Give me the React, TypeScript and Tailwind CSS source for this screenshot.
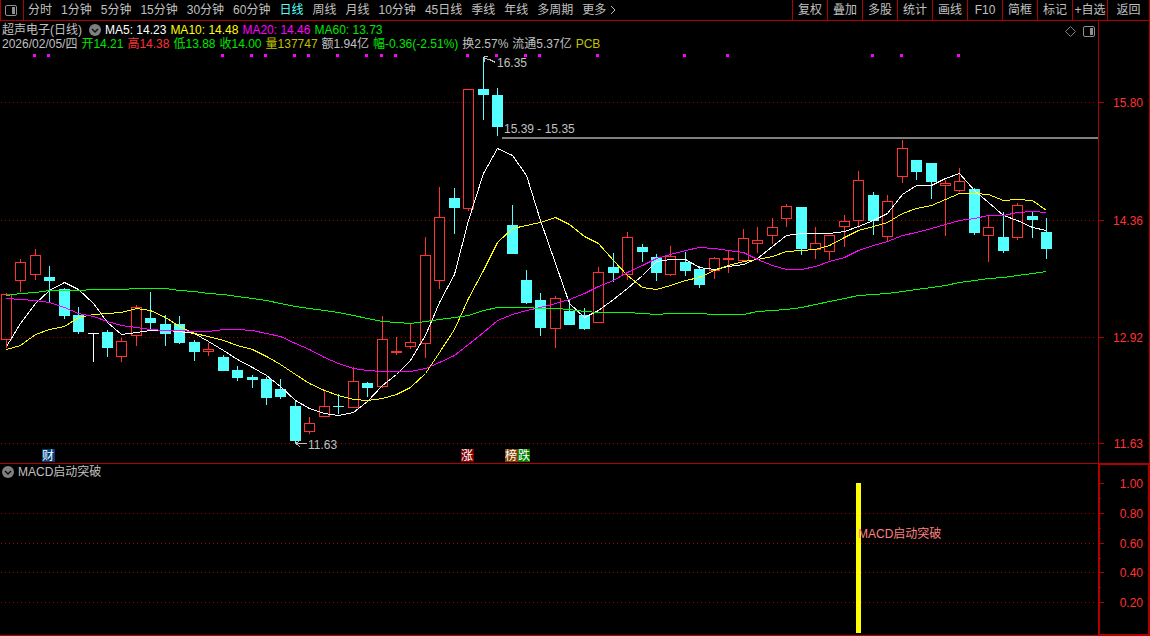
import React from 'react';

type Candle = [kind: 'up' | 'down' | 'flat', high: number, top: number, bottom: number, low: number];

const periods = [
    '分时', '1分钟', '5分钟', '15分钟', '30分钟', '60分钟', '日线', '周线',
    '月线', '10分钟', '45日线', '季线', '年线', '多周期',
];

const tools = ['复权', '叠加', '多股', '统计', '画线', 'F10', '简框', '标记', '+自选'];

const averages = [
    { label: 'MA5: 14.23', color: 'text-white' },
    { label: 'MA10: 14.48', color: 'text-[#ffff00]' },
    { label: 'MA20: 14.46', color: 'text-[#ff00ff]' },
    { label: 'MA60: 13.73', color: 'text-[#00e600]' },
];

const quote = [
    { label: '2026/02/05/四', color: 'text-[#c0c0c0]' },
    { label: '开14.21', color: 'text-[#00e600]' },
    { label: '高14.38', color: 'text-[#ff3232]' },
    { label: '低13.88', color: 'text-[#00e600]' },
    { label: '收14.00', color: 'text-[#00e600]' },
    { label: '量137747', color: 'text-[#c0c000]' },
    { label: '额1.94亿', color: 'text-[#c0c0c0]' },
    { label: '幅-0.36(-2.51%)', color: 'text-[#00e600]' },
    { label: '换2.57%', color: 'text-[#c0c0c0]' },
    { label: '流通5.37亿', color: 'text-[#c0c0c0]' },
    { label: 'PCB', color: 'text-[#c0c000]' },
];

const candles: Candle[] = [
    ['up', 293, 294, 340, 348], ['up', 259, 262, 281, 292], ['up', 249, 255, 275, 280],
    ['down', 266, 277, 281, 302], ['down', 288, 289, 316, 319], ['down', 307, 315, 332, 334],
    ['flat', 333, 333, 334, 362], ['down', 330, 332, 348, 357], ['up', 338, 341, 357, 362],
    ['up', 305, 307, 336, 346], ['down', 292, 318, 323, 329], ['down', 315, 324, 334, 346],
    ['down', 316, 324, 343, 344], ['down', 340, 342, 352, 361], ['up', 343, 349, 352, 356],
    ['down', 355, 357, 371, 371], ['down', 366, 370, 378, 381], ['down', 375, 377, 380, 388],
    ['down', 377, 379, 398, 405], ['down', 379, 389, 397, 399], ['down', 401, 406, 441, 443],
    ['up', 417, 423, 432, 434], ['up', 390, 406, 417, 417], ['down', 394, 406, 407, 414],
    ['up', 367, 381, 408, 408], ['down', 382, 383, 388, 397], ['up', 316, 339, 387, 388],
    ['up', 337, 351, 353, 355], ['up', 324, 342, 347, 349], ['up', 237, 255, 344, 358],
    ['up', 187, 217, 281, 289], ['down', 188, 198, 208, 234], ['up', 89, 89, 209, 211],
    ['down', 57, 89, 95, 120], ['down', 88, 95, 127, 136], ['down', 205, 225, 254, 254],
    ['down', 270, 280, 303, 304], ['down', 293, 300, 328, 336], ['up', 296, 298, 329, 348],
    ['down', 300, 311, 325, 325], ['down', 308, 315, 329, 330], ['up', 267, 272, 323, 323],
    ['down', 253, 267, 273, 282], ['up', 232, 237, 275, 280], ['down', 244, 247, 252, 262],
    ['down', 254, 257, 273, 281], ['up', 246, 256, 275, 276], ['down', 252, 262, 271, 276],
    ['down', 266, 269, 285, 288], ['up', 257, 258, 271, 279], ['up', 251, 258, 260, 273],
    ['up', 229, 238, 261, 261], ['up', 227, 240, 244, 253], ['up', 218, 227, 236, 244],
    ['up', 204, 206, 219, 227], ['down', 207, 207, 249, 255], ['up', 227, 243, 250, 259],
    ['up', 235, 235, 252, 260], ['up', 215, 221, 227, 247], ['up', 171, 180, 221, 228],
    ['down', 192, 195, 221, 235], ['up', 195, 201, 237, 241], ['up', 140, 148, 177, 183],
    ['down', 160, 160, 172, 180], ['down', 163, 163, 182, 199], ['up', 180, 183, 186, 236],
    ['up', 168, 181, 191, 192], ['down', 188, 189, 233, 235], ['up', 216, 227, 236, 262],
    ['down', 212, 237, 251, 253], ['up', 203, 205, 238, 240], ['down', 212, 216, 220, 238],
    ['down', 218, 232, 249, 259],
];

const ma5 = [
    346, 323, 303, 290, 282, 289, 303, 322, 334, 332, 330, 330, 331, 333, 341, 350, 359, 367, 375,
    386, 400, 408, 413, 415, 412, 401, 385, 374, 360, 335, 302, 274, 220, 173, 148, 155, 175, 220,
    263, 303, 317, 310, 299, 288, 275, 261, 259, 259, 267, 269, 266, 264, 258, 246, 235, 233, 233,
    233, 231, 226, 220, 213, 194, 185, 185, 178, 173, 190, 202, 215, 220, 227, 230,
];

const ma10 = [
    349, 345, 334, 329, 326, 317, 314, 313, 312, 308, 310, 317, 326, 333, 336, 340, 345, 349, 356,
    364, 374, 383, 390, 395, 399, 400, 398, 394, 387, 373, 352, 329, 298, 270, 242, 228, 225, 222,
    217, 224, 236, 243, 260, 275, 287, 289, 285, 280, 277, 270, 265, 261, 259, 256, 251, 250, 249,
    245, 237, 230, 226, 222, 213, 208, 205, 199, 193, 193, 194, 200, 199, 200, 210,
];

const ma20 = [
    298, 299, 300, 302, 307, 313, 316, 321, 325, 327, 329, 330, 330, 331, 331, 329, 329, 330, 333,
    336, 343, 349, 357, 363, 368, 370, 371, 371, 371, 368, 362, 355, 344, 332, 320, 314, 310, 307,
    303, 299, 293, 286, 280, 272, 265, 258, 254, 250, 247, 248, 250, 252, 259, 265, 269, 269, 266,
    261, 257, 250, 245, 241, 235, 232, 228, 224, 220, 218, 215, 215, 212, 211, 212,
];

const ma60 = [
    295, 293, 292, 290, 290, 290, 289, 289, 289, 288, 288, 288, 290, 291, 293, 294, 296, 298, 300,
    303, 306, 308, 310, 312, 315, 318, 321, 322, 323, 321, 319, 317, 315, 310, 307, 307, 307, 308,
    308, 309, 311, 312, 312, 312, 313, 314, 313, 313, 313, 314, 314, 314, 311, 310, 309, 307, 304,
    301, 298, 295, 294, 293, 291, 289, 287, 285, 282, 280, 278, 277, 275, 273, 271,
];

const signals = [
    34, 48, 222, 251, 265, 294, 308, 337, 366, 381, 395, 467, 496, 525, 539, 597, 684, 727, 872,
    901, 958,
];

const events = [
    { x: 42, width: 13, label: '财', fill: '#003c78' },
    { x: 461, width: 13, label: '涨', fill: '#800000' },
    { x: 505, width: 13, label: '榜', fill: '#804000' },
    { x: 518, width: 12, label: '跌', fill: '#008000' },
];

const priceTicks = [
    { y: 102, label: '15.80' },
    { y: 220, label: '14.36' },
    { y: 337, label: '12.92' },
    { y: 443, label: '11.63' },
];

const signalTicks = [
    { y: 483, label: '1.00' },
    { y: 513, label: '0.80' },
    { y: 543, label: '0.60' },
    { y: 572, label: '0.40' },
    { y: 602, label: '0.20' },
];

const candleX = (i: number) => Math.floor(6.416 + i * 14.447);

const PanelIcon: React.FC = () => (
    <svg width="12" height="11" viewBox="0 0 12 11" aria-hidden="true">
        <rect x="0.5" y="0.5" width="11" height="10" rx="1.5" fill="none" stroke="#909090" />
        <rect x="7" y="2" width="3" height="7" fill="#909090" />
    </svg>
);

const ToggleIcon: React.FC = () => (
    <svg width="12" height="12" viewBox="0 0 12 12" aria-hidden="true">
        <circle cx="6" cy="6" r="6" fill="#808080" />
        <path d="M3 5l3 3 3-3" fill="none" stroke="#101010" strokeWidth="1.5" />
    </svg>
);

const GridLine: React.FC<{ y: number }> = ({ y }) => (
    <line x1="1" x2="1096" y1={y + 0.5} y2={y + 0.5} stroke="#a00000" strokeDasharray="1 3" />
);

const CandleShape: React.FC<{ index: number; candle: Candle }> = ({ index, candle }) => {
    const [kind, high, top, bottom, low] = candle;
    const x = candleX(index);
    const color = kind === 'up' ? '#ff3232' : kind === 'down' ? '#54ffff' : '#ffffff';

    return (
        <g fill={color}>
            <rect x={x} y={high} width="1" height={top - high} />
            <rect x={x} y={bottom} width="1" height={low - bottom} />
            {kind === 'up' && bottom - top > 2 ? (
                <rect x={x - 4.5} y={top + 0.5} width="10" height={bottom - top - 1} fill="none" stroke={color} />
            ) : (
                <rect x={x - 5} y={top} width="11" height={bottom - top} />
            )}
        </g>
    );
};

const Average: React.FC<{ values: number[]; color: string }> = ({ values, color }) => (
    <polyline
        points={values.map((y, i) => `${candleX(i) + 0.5},${y + 0.5}`).join(' ')}
        fill="none"
        stroke={color}
    />
);

const Toolbar: React.FC = () => (
    <header className="flex h-[21px] items-stretch whitespace-nowrap border-b border-l border-[#b00000]">
        <button aria-label="侧栏" className="flex w-[23px] items-center border-r border-[#b00000] pl-1">
            <PanelIcon />
        </button>
        <nav className="flex items-center gap-[9px] pl-1">
            {periods.map((period) => (
                <button key={period} className={period === '日线' ? 'text-[#54ffff]' : ''}>
                    {period}
                </button>
            ))}
            <button className="flex items-center gap-1">
                更多
                <svg width="6" height="10" viewBox="0 0 6 10" aria-hidden="true">
                    <path d="M1 1l4 4-4 4" fill="none" stroke="#c0c0c0" />
                </svg>
            </button>
        </nav>
        <div className="ml-auto flex items-stretch">
            {tools.map((tool) => (
                <button key={tool} className="w-[35px] border-l border-[#b00000]">
                    {tool}
                </button>
            ))}
            <button className="w-[43px] border-x border-[#b00000]">返回</button>
        </div>
    </header>
);

const PriceChart: React.FC = () => (
    <svg viewBox="0 51 1098 412" className="block h-auto w-full text-xs" shapeRendering="crispEdges">
        {priceTicks.map((tick) => (
            <GridLine key={tick.y} y={tick.y} />
        ))}
        {signals.map((x) => (
            <rect key={x} x={x - 1} y="54" width="3" height="3" fill="#ff00ff" />
        ))}
        {candles.map((candle, i) => (
            <CandleShape key={i} index={i} candle={candle} />
        ))}
        <Average values={ma5} color="#ffffff" />
        <Average values={ma10} color="#ffff00" />
        <Average values={ma20} color="#ff00ff" />
        <Average values={ma60} color="#00ff00" />

        {/* price gap */}
        <rect x="502" y="137" width="596" height="2" fill="#808080" />
        <text x="504" y="133" fill="#c0c0c0">15.39 - 15.35</text>

        {/* highest and lowest price */}
        <path d="M484.5 58.5l5 1 6 3M488 56.5h-3.5v5" fill="none" stroke="#c0c0c0" />
        <text x="497" y="67" fill="#c0c0c0">16.35</text>
        <path d="M307 443.5h-11l4-3M296 443.5l4 3" fill="none" stroke="#c0c0c0" />
        <text x="308" y="449" fill="#c0c0c0">11.63</text>

        {events.map((event) => (
            <g key={event.label}>
                <rect x={event.x} y="449" width={event.width} height="13" fill={event.fill} />
                <text x={event.x} y="460" fill="#ffffff">{event.label}</text>
            </g>
        ))}
    </svg>
);

const SignalChart: React.FC = () => (
    <svg viewBox="0 480 1098 155" className="block h-auto w-full text-xs" shapeRendering="crispEdges">
        {signalTicks.slice(1).map((tick) => (
            <GridLine key={tick.y} y={tick.y} />
        ))}
        <rect x="856" y="483" width="5" height="150" fill="#ffff00" />
        <text x="858" y="538" fill="#ff8080">MACD启动突破</text>
    </svg>
);

const App: React.FC = () => {
    return (
        <div className="min-h-screen bg-black font-['Liberation_Sans','Noto_Sans_CJK_SC',sans-serif] text-xs text-[#c0c0c0]">
            <Toolbar />

            <main>
                <section className="flex border-b border-[#b00000]">
                    <div className="min-w-0 flex-1">
                        <div className="flex justify-between whitespace-nowrap pl-0.5 pr-[3px] pt-0.5 leading-[14px]">
                            <div>
                                <div className="flex h-[14px] items-center gap-1">
                                    <h1>超声电子(日线)</h1>
                                    <button aria-label="指标" className="pl-[3px]">
                                        <ToggleIcon />
                                    </button>
                                    {averages.map((item) => (
                                        <span key={item.label} className={item.color}>{item.label}</span>
                                    ))}
                                </div>
                                <div className="flex h-[14px] items-center gap-1">
                                    {quote.map((item) => (
                                        <span key={item.label} className={item.color}>{item.label}</span>
                                    ))}
                                </div>
                            </div>
                            <div className="flex h-4 items-center gap-[7px]">
                                <button aria-label="标注">
                                    <svg width="11" height="11" viewBox="0 0 11 11" aria-hidden="true">
                                        <path d="M5.5 0.5l5 5-5 5-5-5z" fill="none" stroke="#808080" />
                                    </svg>
                                </button>
                                <button aria-label="面板">
                                    <PanelIcon />
                                </button>
                            </div>
                        </div>
                        <PriceChart />
                    </div>
                    <svg
                        viewBox="1098 21 52 442"
                        preserveAspectRatio="none"
                        className="block w-[52px] shrink-0"
                        shapeRendering="crispEdges"
                    >
                        <path d="M1098.5 21v442M1149.5 21v442" stroke="#b00000" />
                        {priceTicks.map((tick) => (
                            <g key={tick.y}>
                                <rect x="1099" y={tick.y} width="5" height="1" fill="#b00000" />
                                <text x="1143" y={tick.y + 5} textAnchor="end" fill="#ff3232">{tick.label}</text>
                            </g>
                        ))}
                    </svg>
                </section>

                <section className="flex">
                    <div className="min-w-0 flex-1 border-b border-[#b00000]">
                        <div className="flex h-4 items-center gap-1 pl-0.5">
                            <button aria-label="展开指标">
                                <ToggleIcon />
                            </button>
                            <h2>MACD启动突破</h2>
                        </div>
                        <SignalChart />
                    </div>
                    <svg
                        viewBox="1098 464 52 172"
                        preserveAspectRatio="none"
                        className="block w-[52px] shrink-0"
                        shapeRendering="crispEdges"
                    >
                        <rect x="1099" y="464" width="50" height="171" fill="none" stroke="#b00000" strokeWidth="2" />
                        {signalTicks.map((tick, i) => (
                            <g key={tick.y}>
                                <rect x="1100" y={tick.y} width="4" height="1" fill="#b00000" />
                                {i < 4 && <rect x="1100" y={tick.y + 15} width="1" height="1" fill="#b00000" />}
                                <text x="1143" y={tick.y + 5} textAnchor="end" fill="#ff3232">{tick.label}</text>
                            </g>
                        ))}
                    </svg>
                </section>
            </main>
        </div>
    );
};

export default App;
